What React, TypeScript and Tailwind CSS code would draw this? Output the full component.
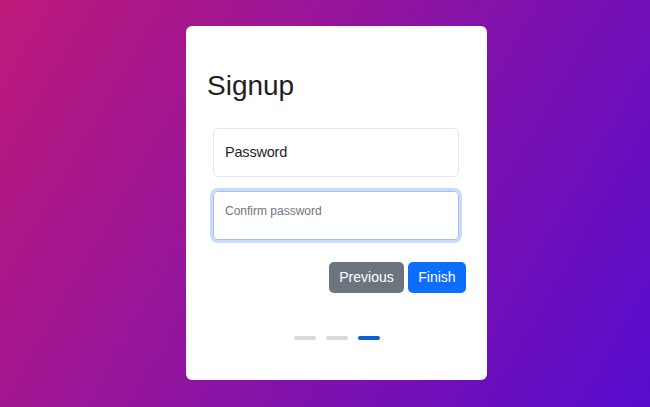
import React from "react";

const font = { fontFamily: '"Liberation Sans", Arial, sans-serif' };

export default function App() {
  const step = 2;
  const steps = [0, 1, 2];

  return (
    <div
      className="w-[650px] h-[407px] bg-[linear-gradient(120deg,#be1a7a,#560cce)] pl-[186px] pt-[26px]"
      style={font}
    >
      <div className="w-[301px] h-[354px] bg-white rounded-[6px] px-[21px] pt-[43px] flex flex-col">
        <h1 className="text-[28px] leading-[34px] text-[#1f1f1f] font-normal">Signup</h1>

        <div className="ml-[6px] mr-[7px] mt-[25px] flex flex-col gap-[14px]">
          {/* Password field, label resting in the middle */}
          <div className="h-[49px] border border-[#e9e9ec] rounded-[5px] flex items-center px-[11px]">
            <span className="text-[14.5px] tracking-[-0.2px] text-[#212529]">Password</span>
          </div>

          {/* Confirm field, focused with the label floated up */}
          <div className="h-[49px] border border-[#a4c0f0] rounded-[5px] ring-[3px] ring-[#c9dbf8] px-[11px] pt-[6px]">
            <span className="text-[12px] leading-[16px] text-[#6c757d]">Confirm password</span>
          </div>
        </div>

        <div className="mt-[22px] flex justify-end gap-[4px]">
          <button className="h-[31px] w-[75px] rounded-[5px] bg-[#6c757d] text-white text-[14px]">
            Previous
          </button>
          <button className="h-[31px] w-[58px] rounded-[5px] bg-[#0d6efd] text-white text-[14px]">
            Finish
          </button>
        </div>

        <div className="mt-[43px] flex justify-center gap-[10px]">
          {steps.map((s) => (
            <span
              key={s}
              className={`block w-[22px] h-[4px] rounded-full ${s === step ? "bg-[#0b5ed7]" : "bg-[#d9d9d9]"}`}
            />
          ))}
        </div>
      </div>
    </div>
  );
}
